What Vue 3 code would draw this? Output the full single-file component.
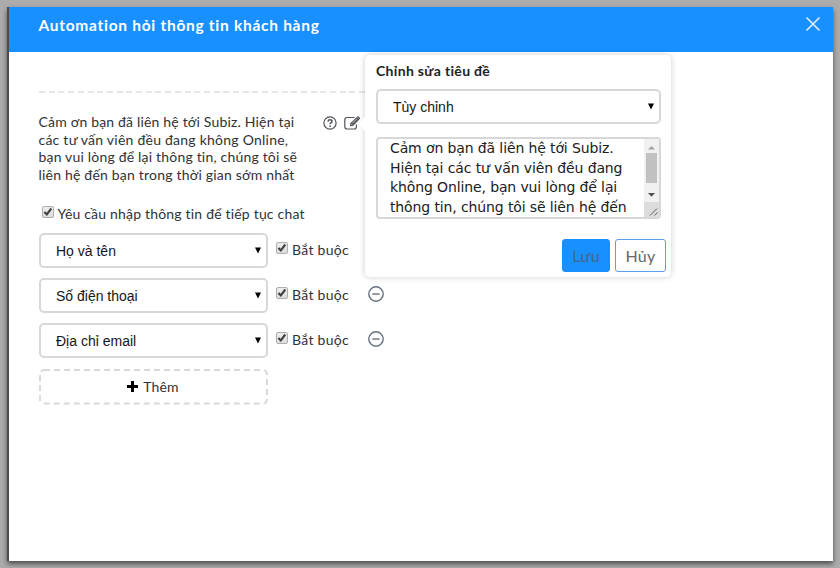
<script setup>
const intro = [
  { text: 'Cảm ơn bạn đã liên hệ tới Subiz. Hiện tại', cls: 'l1' },
  { text: 'các tư vấn viên đều đang không Online,', cls: 'l2' },
  { text: 'bạn vui lòng để lại thông tin, chúng tôi sẽ', cls: 'l3' },
  { text: 'liên hệ đến bạn trong thời gian sớm nhất', cls: 'l4' },
]
const fields = [
  { label: 'Họ và tên', removable: false },
  { label: 'Số điện thoại', removable: true },
  { label: 'Địa chỉ email', removable: true },
]
const message = ['Cảm ơn bạn đã liên hệ tới Subiz.', 'Hiện tại các tư vấn viên đều đang', 'không Online, bạn vui lòng để lại', 'thông tin, chúng tôi sẽ liên hệ đến']
</script>

<template>
  <div class="backdrop">
    <div class="modal">
      <header class="head">
        <h1><span>Automation hỏi thông tin khách hàng</span></h1>
        <svg class="close" width="16" height="16" viewBox="0 0 16 16"><path d="M1.5 1.5l13 13M14.5 1.5l-13 13" /></svg>
      </header>
      <main class="body">
        <div class="rule"></div>
        <section class="intro">
          <div class="copy">
            <div v-for="l in intro" :key="l.cls"><span :class="l.cls">{{ l.text }}</span></div>
          </div>
          <svg class="help" width="14" height="14" viewBox="0 0 14 14">
            <circle cx="7" cy="7" r="6.1" />
            <path d="M5 5.6C5.1 4.2 6 3.8 7 3.8c1.2 0 2 .7 2 1.6C9 6.700 7.200 6.700 7.100 8.200" />
            <path d="M7.100 9.400v1.500" />
          </svg>
          <svg class="edit" width="17" height="14" viewBox="0 0 17 14">
            <path class="box" d="M10.5 1.5H3A2.3 2.3 0 0 0 .8 3.7v7A2.3 2.3 0 0 0 3 13h7.2a2.3 2.3 0 0 0 2.2-2.3V8.5" />
            <path class="pen" d="M6 10.3l.3-3L12.7.9l2.7 2.7L9 10z" />
            <path class="pen" d="M13.2.5q.7-.6 1.3 0l1.3 1.3q.6.6 0 1.3l-.3.3-2.6-2.6z" />
            <path class="shine" d="M7.3 8l1.1 1.1M8.4 7.2l4.3-4.3" />
          </svg>
        </section>
        <label class="check require">
          <i class="cb"><svg viewBox="0 0 12 12"><path d="M2.4 6.1l2.4 2.4 4.5-6" /></svg></i>
          <span class="reqtext">Yêu cầu nhập thông tin để tiếp tục chat</span>
        </label>
        <div v-for="f in fields" :key="f.label" class="row">
          <div class="select"><span>{{ f.label }}</span><svg width="6" height="7" viewBox="0 0 6 7"><path d="M0 .5h6L3 6.500z" /></svg></div>
          <label class="check">
            <i class="cb"><svg viewBox="0 0 12 12"><path d="M2.4 6.1l2.4 2.4 4.5-6" /></svg></i>
            <span class="must">Bắt buộc</span>
          </label>
          <svg v-if="f.removable" class="minus" width="16" height="16" viewBox="0 0 16 16"><circle cx="8" cy="8" r="7.2" /><path d="M4.3 8h7.4" /></svg>
        </div>
        <div class="add">
          <svg class="dash" width="229" height="36" viewBox="0 0 229 36"><rect x="1" y="1" width="227" height="33.500" rx="4" /></svg>
          <svg width="11" height="11" viewBox="0 0 11 11"><path d="M4 0h3v4h4v3H7v4H4V7H0V4h4z" /></svg>
          <span>Thêm</span>
        </div>
      </main>
    </div>

    <div class="popover">
      <h2><span>Chỉnh sửa tiêu đề</span></h2>
      <div class="select wide"><span>Tùy chỉnh</span><svg width="6" height="7" viewBox="0 0 6 7"><path d="M0 .5h6L3 6.500z" /></svg></div>
      <div class="area">
        <div class="msg"><div v-for="m in message" :key="m">{{ m }}</div></div>
        <div class="scroll">
          <svg width="15" height="14" viewBox="0 0 15 14"><path class="off" d="M4 10.5h7L7.5 7z" /></svg>
          <div class="thumb"></div>
          <svg width="15" height="19" viewBox="0 0 15 19"><path d="M4 10h7l-3.500 3.700z" /></svg>
          <svg class="grip" width="15" height="15" viewBox="0 0 15 15"><path d="M6 13.500l7-7M10.500 13.500l3-3" /></svg>
        </div>
      </div>
      <div class="actions">
        <button class="save">Lưu</button>
        <button class="cancel">Hủy</button>
      </div>
    </div>
  </div>
</template>

<style>
body { background: #acacac; overflow: hidden; }
</style>
<style scoped>
* { box-sizing: border-box; }
.backdrop { position: relative; height: 568px; padding: 7px; overflow: hidden; font: 14px/17.7px Lato, sans-serif; color: #303236; background: #acacac; }
.modal { width: 826px; height: 554px; background: #fff; border-left: 2px solid #4b4b4b; box-shadow: 0 3px 5px rgba(0, 0, 0, .55); }
.head { height: 45px; padding: 9px 12.500px 0 29.500px; display: flex; justify-content: space-between; background: #1890ff; color: #fff; }
h1 { margin: 0; font-size: 15.500px; line-height: 19px; font-weight: 700; letter-spacing: .72px; white-space: nowrap; }
.close { fill: none; stroke: #e8f4ff; stroke-width: 1.5; }
.body { padding: 39px 0 0 29.500px; }
.rule { width: 346px; height: 2px; background: repeating-linear-gradient(90deg, #e6e6e6 0 6px, #fff 6px 9.7px); }
.intro { display: flex; padding-top: 20px; }
.copy { width: 284px; height: 71px; white-space: nowrap; }
.l1 { letter-spacing: .18px; }
.l2 { letter-spacing: .24px; }
.l3 { letter-spacing: .19px; }
.l4 { letter-spacing: .2px; }
.help, .edit { margin-top: 3px; fill: none; stroke: #50545a; stroke-width: 1.2; }
.help path { stroke-width: 1.5; }
.edit { margin-left: 7px; }
.edit .pen { fill: #50545a; stroke: none; }
.edit .shine { stroke: #fff; stroke-width: .7; }
.check { display: flex; white-space: nowrap; }
.require { height: 29px; margin: 20px 0 0 3.500px; }
.cb { display: block; width: 12px; height: 12px; border: 1px solid #adadad; border-radius: 2px; background: linear-gradient(#eee, #dcdcdc); }
.require .cb { margin: 1.500px 3.500px 0 0; }
.reqtext { padding-top: 1px; letter-spacing: .19px; }
.cb svg { display: block; width: 12px; height: 12px; margin: -1px; fill: none; stroke: #404040; stroke-width: 2.1; }
.row { display: flex; height: 35px; margin-bottom: 10.200px; }
.select { width: 229px; height: 35px; border: 2px solid #d8d8d8; border-radius: 5px; padding: 0 5px 0 15.500px; display: flex; align-items: center; justify-content: space-between; background: #fff; color: #161616; font: 14px/16px "Liberation Sans", sans-serif; }
.select svg, .add svg { fill: #000; }
.row .check { width: 100px; padding: 8px 0 0 8.500px; }
.row .cb { margin: 1px 4px 0 0; }
.must { letter-spacing: .3px; }
.minus { margin-top: 8px; fill: none; stroke: #65717f; stroke-width: 1.4; }
.add { position: relative; width: 229px; height: 35px; padding-top: 1px; display: flex; align-items: center; justify-content: center; gap: 5px; letter-spacing: .2px; }
.add .dash { position: absolute; inset: 0; fill: none; stroke: #d9d9d9; stroke-width: 2; stroke-dasharray: 6 4; }
.popover { position: absolute; left: 365px; top: 55px; width: 306px; height: 222px; padding: 6px 5px 0 11px; background: #fff; border-radius: 5px; box-shadow: 0 0 6px rgba(0, 0, 0, .2); }
.popover::before { content: ""; position: absolute; left: -6px; top: 62px; width: 6px; height: 14px; background: #fff; clip-path: polygon(100% 0, 0 50%, 100% 100%); }
h2 { margin: 0; height: 28.400px; font-size: 14px; line-height: 19px; font-weight: 700; letter-spacing: .32px; color: #222; white-space: nowrap; }
.wide { width: 285px; padding-left: 15px; }
.area { display: flex; width: 285px; height: 82px; margin-top: 12.600px; border: 2px solid #d8d8d8; border-radius: 4px; overflow: hidden; }
.msg { width: 266px; padding-left: 12px; font: 14px/19.600px "DejaVu Sans", sans-serif; letter-spacing: -.12px; color: #202020; white-space: nowrap; }
.scroll { width: 15px; height: 78px; background: #f1f1f1; display: flex; flex-direction: column; flex: none; }
.scroll svg { display: block; fill: #505050; flex: none; }
.scroll .off { fill: #a3a3a3; }
.thumb { height: 30px; margin: 0 2px; background: #c1c1c1; }
.scroll .grip { background: #dcdcdc; fill: none; stroke: #606060; }
.actions { display: flex; justify-content: flex-end; gap: 5px; margin-top: 20px; }
button { height: 33px; padding: 0; border: 1px solid #1890ff; border-radius: 3px; font: 16px Lato, sans-serif; letter-spacing: .3px; color: #666; background: #fff; }
.save { width: 48px; background: #1890ff; color: #46648a; }
.cancel { width: 51px; border-color: #5da0ea; }
</style>
